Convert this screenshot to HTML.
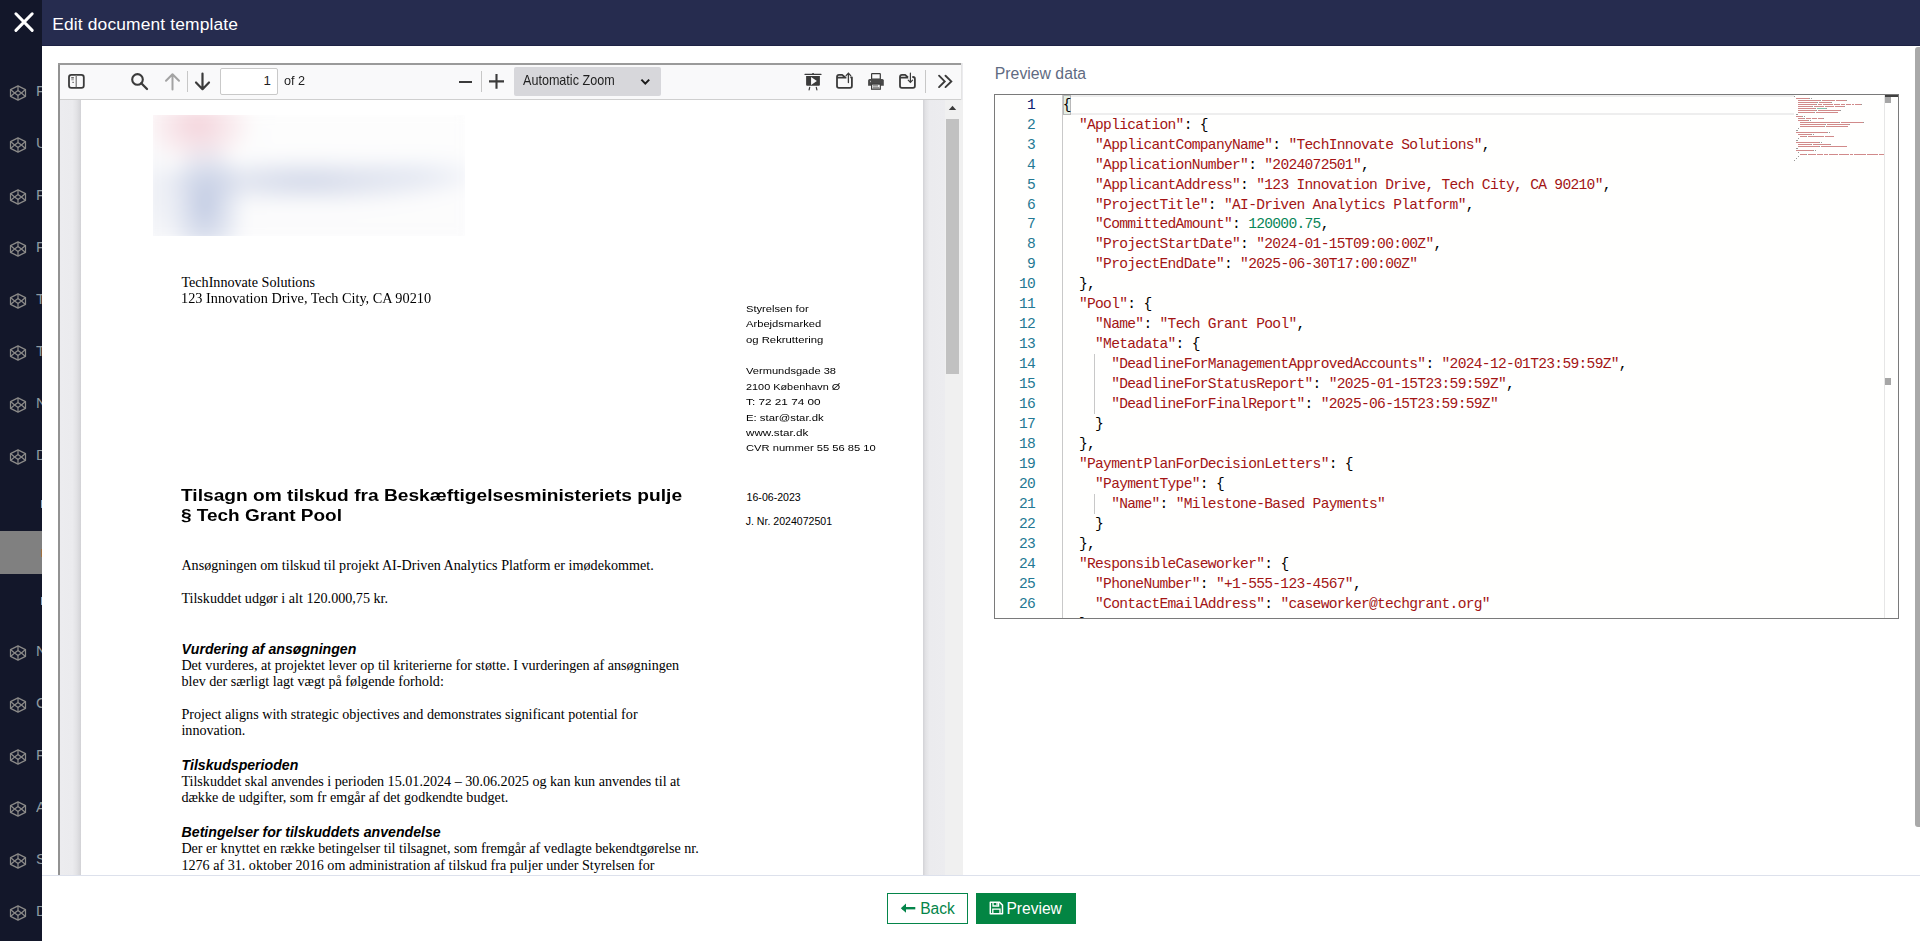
<!DOCTYPE html><html><head><meta charset="utf-8"><style>
html,body{margin:0;padding:0;width:1920px;height:941px;overflow:hidden;background:#fff;}
.t{position:absolute;white-space:pre;}
.r{position:absolute;}
svg{position:absolute;overflow:visible;}
</style></head><body><div class="r" style="left:0px;top:0px;width:42px;height:941px;background:#13172a;"></div><div class="r" style="left:42px;top:0px;width:1878px;height:46px;background:#262c4f;"></div><div class="r" style="left:42px;top:45px;width:1878px;height:1px;background:#1d2244;"></div><svg style="left:0;top:0" width="42" height="46"><path d="M15.9 13.8 L32.2 30.4 M32.2 13.8 L15.9 30.4" stroke="#fff" stroke-width="3" stroke-linecap="round"/></svg><div class="t" style="left:52.30px;top:14.75px;font-family:'Liberation Sans', sans-serif;font-size:17.4px;line-height:19.439px;color:#ffffff;font-weight:normal;font-style:normal;letter-spacing:0.14px;">Edit document template</div><div class="r" style="left:0px;top:531px;width:42px;height:43px;background:#808080;"></div><svg style="left:9px;top:83.5px" width="18" height="18" viewBox="-9 -9 18 18"><g fill="none" stroke="#8b8a88" stroke-width="1.25" stroke-linejoin="round">
<path d="M0 -7.1 L7.5 -3.4 L7.5 3.4 L0 7.1 L-7.5 3.4 L-7.5 -3.4 Z"/>
<path d="M0 -2.5 L3.4 0 L0 2.5 L-3.4 0 Z"/>
<path d="M0 -7.1 V-2.5 M0 2.5 V7.1 M-7.5 -3.4 L-3.4 0 L-7.5 3.4 M7.5 -3.4 L3.4 0 L7.5 3.4"/></g></svg><div class="t" style="left:36px;top:82.0px;width:6px;overflow:hidden;font-family:'Liberation Sans', sans-serif;font-size:15px;line-height:17px;color:#8f9aa0">F</div><svg style="left:9px;top:135.5px" width="18" height="18" viewBox="-9 -9 18 18"><g fill="none" stroke="#8b8a88" stroke-width="1.25" stroke-linejoin="round">
<path d="M0 -7.1 L7.5 -3.4 L7.5 3.4 L0 7.1 L-7.5 3.4 L-7.5 -3.4 Z"/>
<path d="M0 -2.5 L3.4 0 L0 2.5 L-3.4 0 Z"/>
<path d="M0 -7.1 V-2.5 M0 2.5 V7.1 M-7.5 -3.4 L-3.4 0 L-7.5 3.4 M7.5 -3.4 L3.4 0 L7.5 3.4"/></g></svg><div class="t" style="left:36px;top:134.0px;width:6px;overflow:hidden;font-family:'Liberation Sans', sans-serif;font-size:15px;line-height:17px;color:#8f9aa0">U</div><svg style="left:9px;top:187.5px" width="18" height="18" viewBox="-9 -9 18 18"><g fill="none" stroke="#8b8a88" stroke-width="1.25" stroke-linejoin="round">
<path d="M0 -7.1 L7.5 -3.4 L7.5 3.4 L0 7.1 L-7.5 3.4 L-7.5 -3.4 Z"/>
<path d="M0 -2.5 L3.4 0 L0 2.5 L-3.4 0 Z"/>
<path d="M0 -7.1 V-2.5 M0 2.5 V7.1 M-7.5 -3.4 L-3.4 0 L-7.5 3.4 M7.5 -3.4 L3.4 0 L7.5 3.4"/></g></svg><div class="t" style="left:36px;top:186.0px;width:6px;overflow:hidden;font-family:'Liberation Sans', sans-serif;font-size:15px;line-height:17px;color:#8f9aa0">F</div><svg style="left:9px;top:239.5px" width="18" height="18" viewBox="-9 -9 18 18"><g fill="none" stroke="#8b8a88" stroke-width="1.25" stroke-linejoin="round">
<path d="M0 -7.1 L7.5 -3.4 L7.5 3.4 L0 7.1 L-7.5 3.4 L-7.5 -3.4 Z"/>
<path d="M0 -2.5 L3.4 0 L0 2.5 L-3.4 0 Z"/>
<path d="M0 -7.1 V-2.5 M0 2.5 V7.1 M-7.5 -3.4 L-3.4 0 L-7.5 3.4 M7.5 -3.4 L3.4 0 L7.5 3.4"/></g></svg><div class="t" style="left:36px;top:238.0px;width:6px;overflow:hidden;font-family:'Liberation Sans', sans-serif;font-size:15px;line-height:17px;color:#8f9aa0">F</div><svg style="left:9px;top:291.5px" width="18" height="18" viewBox="-9 -9 18 18"><g fill="none" stroke="#8b8a88" stroke-width="1.25" stroke-linejoin="round">
<path d="M0 -7.1 L7.5 -3.4 L7.5 3.4 L0 7.1 L-7.5 3.4 L-7.5 -3.4 Z"/>
<path d="M0 -2.5 L3.4 0 L0 2.5 L-3.4 0 Z"/>
<path d="M0 -7.1 V-2.5 M0 2.5 V7.1 M-7.5 -3.4 L-3.4 0 L-7.5 3.4 M7.5 -3.4 L3.4 0 L7.5 3.4"/></g></svg><div class="t" style="left:36px;top:290.0px;width:6px;overflow:hidden;font-family:'Liberation Sans', sans-serif;font-size:15px;line-height:17px;color:#8f9aa0">T</div><svg style="left:9px;top:343.5px" width="18" height="18" viewBox="-9 -9 18 18"><g fill="none" stroke="#8b8a88" stroke-width="1.25" stroke-linejoin="round">
<path d="M0 -7.1 L7.5 -3.4 L7.5 3.4 L0 7.1 L-7.5 3.4 L-7.5 -3.4 Z"/>
<path d="M0 -2.5 L3.4 0 L0 2.5 L-3.4 0 Z"/>
<path d="M0 -7.1 V-2.5 M0 2.5 V7.1 M-7.5 -3.4 L-3.4 0 L-7.5 3.4 M7.5 -3.4 L3.4 0 L7.5 3.4"/></g></svg><div class="t" style="left:36px;top:342.0px;width:6px;overflow:hidden;font-family:'Liberation Sans', sans-serif;font-size:15px;line-height:17px;color:#8f9aa0">T</div><svg style="left:9px;top:395.5px" width="18" height="18" viewBox="-9 -9 18 18"><g fill="none" stroke="#8b8a88" stroke-width="1.25" stroke-linejoin="round">
<path d="M0 -7.1 L7.5 -3.4 L7.5 3.4 L0 7.1 L-7.5 3.4 L-7.5 -3.4 Z"/>
<path d="M0 -2.5 L3.4 0 L0 2.5 L-3.4 0 Z"/>
<path d="M0 -7.1 V-2.5 M0 2.5 V7.1 M-7.5 -3.4 L-3.4 0 L-7.5 3.4 M7.5 -3.4 L3.4 0 L7.5 3.4"/></g></svg><div class="t" style="left:36px;top:394.0px;width:6px;overflow:hidden;font-family:'Liberation Sans', sans-serif;font-size:15px;line-height:17px;color:#8f9aa0">N</div><svg style="left:9px;top:447.5px" width="18" height="18" viewBox="-9 -9 18 18"><g fill="none" stroke="#8b8a88" stroke-width="1.25" stroke-linejoin="round">
<path d="M0 -7.1 L7.5 -3.4 L7.5 3.4 L0 7.1 L-7.5 3.4 L-7.5 -3.4 Z"/>
<path d="M0 -2.5 L3.4 0 L0 2.5 L-3.4 0 Z"/>
<path d="M0 -7.1 V-2.5 M0 2.5 V7.1 M-7.5 -3.4 L-3.4 0 L-7.5 3.4 M7.5 -3.4 L3.4 0 L7.5 3.4"/></g></svg><div class="t" style="left:36px;top:446.0px;width:6px;overflow:hidden;font-family:'Liberation Sans', sans-serif;font-size:15px;line-height:17px;color:#8f9aa0">D</div><svg style="left:9px;top:643.5px" width="18" height="18" viewBox="-9 -9 18 18"><g fill="none" stroke="#8b8a88" stroke-width="1.25" stroke-linejoin="round">
<path d="M0 -7.1 L7.5 -3.4 L7.5 3.4 L0 7.1 L-7.5 3.4 L-7.5 -3.4 Z"/>
<path d="M0 -2.5 L3.4 0 L0 2.5 L-3.4 0 Z"/>
<path d="M0 -7.1 V-2.5 M0 2.5 V7.1 M-7.5 -3.4 L-3.4 0 L-7.5 3.4 M7.5 -3.4 L3.4 0 L7.5 3.4"/></g></svg><div class="t" style="left:36px;top:642.0px;width:6px;overflow:hidden;font-family:'Liberation Sans', sans-serif;font-size:15px;line-height:17px;color:#8f9aa0">N</div><svg style="left:9px;top:695.5px" width="18" height="18" viewBox="-9 -9 18 18"><g fill="none" stroke="#8b8a88" stroke-width="1.25" stroke-linejoin="round">
<path d="M0 -7.1 L7.5 -3.4 L7.5 3.4 L0 7.1 L-7.5 3.4 L-7.5 -3.4 Z"/>
<path d="M0 -2.5 L3.4 0 L0 2.5 L-3.4 0 Z"/>
<path d="M0 -7.1 V-2.5 M0 2.5 V7.1 M-7.5 -3.4 L-3.4 0 L-7.5 3.4 M7.5 -3.4 L3.4 0 L7.5 3.4"/></g></svg><div class="t" style="left:36px;top:694.0px;width:6px;overflow:hidden;font-family:'Liberation Sans', sans-serif;font-size:15px;line-height:17px;color:#8f9aa0">C</div><svg style="left:9px;top:747.5px" width="18" height="18" viewBox="-9 -9 18 18"><g fill="none" stroke="#8b8a88" stroke-width="1.25" stroke-linejoin="round">
<path d="M0 -7.1 L7.5 -3.4 L7.5 3.4 L0 7.1 L-7.5 3.4 L-7.5 -3.4 Z"/>
<path d="M0 -2.5 L3.4 0 L0 2.5 L-3.4 0 Z"/>
<path d="M0 -7.1 V-2.5 M0 2.5 V7.1 M-7.5 -3.4 L-3.4 0 L-7.5 3.4 M7.5 -3.4 L3.4 0 L7.5 3.4"/></g></svg><div class="t" style="left:36px;top:746.0px;width:6px;overflow:hidden;font-family:'Liberation Sans', sans-serif;font-size:15px;line-height:17px;color:#8f9aa0">F</div><svg style="left:9px;top:799.5px" width="18" height="18" viewBox="-9 -9 18 18"><g fill="none" stroke="#8b8a88" stroke-width="1.25" stroke-linejoin="round">
<path d="M0 -7.1 L7.5 -3.4 L7.5 3.4 L0 7.1 L-7.5 3.4 L-7.5 -3.4 Z"/>
<path d="M0 -2.5 L3.4 0 L0 2.5 L-3.4 0 Z"/>
<path d="M0 -7.1 V-2.5 M0 2.5 V7.1 M-7.5 -3.4 L-3.4 0 L-7.5 3.4 M7.5 -3.4 L3.4 0 L7.5 3.4"/></g></svg><div class="t" style="left:36px;top:798.0px;width:6px;overflow:hidden;font-family:'Liberation Sans', sans-serif;font-size:15px;line-height:17px;color:#8f9aa0">A</div><svg style="left:9px;top:851.5px" width="18" height="18" viewBox="-9 -9 18 18"><g fill="none" stroke="#8b8a88" stroke-width="1.25" stroke-linejoin="round">
<path d="M0 -7.1 L7.5 -3.4 L7.5 3.4 L0 7.1 L-7.5 3.4 L-7.5 -3.4 Z"/>
<path d="M0 -2.5 L3.4 0 L0 2.5 L-3.4 0 Z"/>
<path d="M0 -7.1 V-2.5 M0 2.5 V7.1 M-7.5 -3.4 L-3.4 0 L-7.5 3.4 M7.5 -3.4 L3.4 0 L7.5 3.4"/></g></svg><div class="t" style="left:36px;top:850.0px;width:6px;overflow:hidden;font-family:'Liberation Sans', sans-serif;font-size:15px;line-height:17px;color:#8f9aa0">S</div><svg style="left:9px;top:903.5px" width="18" height="18" viewBox="-9 -9 18 18"><g fill="none" stroke="#8b8a88" stroke-width="1.25" stroke-linejoin="round">
<path d="M0 -7.1 L7.5 -3.4 L7.5 3.4 L0 7.1 L-7.5 3.4 L-7.5 -3.4 Z"/>
<path d="M0 -2.5 L3.4 0 L0 2.5 L-3.4 0 Z"/>
<path d="M0 -7.1 V-2.5 M0 2.5 V7.1 M-7.5 -3.4 L-3.4 0 L-7.5 3.4 M7.5 -3.4 L3.4 0 L7.5 3.4"/></g></svg><div class="t" style="left:36px;top:902.0px;width:6px;overflow:hidden;font-family:'Liberation Sans', sans-serif;font-size:15px;line-height:17px;color:#8f9aa0">D</div><div class="r" style="left:41px;top:500px;width:1px;height:8px;background:#7fa6c8;"></div><div class="r" style="left:41px;top:548.5px;width:1px;height:8px;background:#a07040;"></div><div class="r" style="left:41px;top:596.5px;width:1px;height:8px;background:#7fa6c8;"></div><div class="r" style="left:58px;top:63px;width:905px;height:812px;background:#ebebee;"></div><div class="r" style="left:58px;top:63px;width:2px;height:812px;background:#929292;"></div><div class="r" style="left:58px;top:63px;width:904px;height:2px;background:#9a9a9a;"></div><div class="r" style="left:60px;top:65px;width:901px;height:34px;background:#f9f9fa;"></div><div class="r" style="left:961px;top:63px;width:1px;height:37px;background:#e4e4e4;"></div><div class="r" style="left:60px;top:99px;width:901px;height:1px;background:#cfcfcf;"></div><div class="r" style="left:60px;top:100px;width:21px;height:775px;background:linear-gradient(90deg,#ececef 0%,#ebebee 60%,#e2e2e5 80%,#d2d2d6 100%);"></div><div class="r" style="left:923px;top:100px;width:22px;height:775px;background:linear-gradient(90deg,#d2d2d6 0%,#e2e2e5 12%,#ebebee 30%,#ececef 100%);"></div><div class="r" style="left:945px;top:100px;width:18px;height:775px;background:#f0f0f0;"></div><svg style="left:945px;top:100px" width="18" height="20"><path d="M3.8 9.9 L7.5 5.8 L11.2 9.9 Z" fill="#3a3a3a"/></svg><div class="r" style="left:946px;top:119px;width:13px;height:255px;background:#c1c1c1;"></div><div class="r" style="left:81px;top:100px;width:842px;height:775px;background:#ffffff;"></div><svg style="left:66px;top:72px" width="22" height="20" viewBox="0 0 22 20"><rect x="3" y="2.8" width="14.8" height="13" rx="2.4" fill="none" stroke="#3b3b3b" stroke-width="1.8"/><rect x="9.5" y="3.5" width="1.5" height="11.6" fill="#8a8a8a"/><rect x="5.3" y="5.1" width="2.5" height="3.3" fill="#aaa"/><rect x="5.3" y="5.1" width="2.5" height="0.9" fill="#666"/><rect x="6.4" y="9.8" width="1.4" height="1.1" fill="#555"/></svg><svg style="left:128px;top:70px" width="24" height="24" viewBox="0 0 24 24"><circle cx="9.5" cy="9.4" r="5.3" fill="none" stroke="#3b3b3b" stroke-width="2.1"/><path d="M13.3 13.3 L19 19" stroke="#3b3b3b" stroke-width="2.3" stroke-linecap="round"/></svg><svg style="left:162px;top:70px" width="22" height="24" viewBox="0 0 22 24"><path d="M10.5 19.5 V4.5 M4 10.8 L10.5 4.2 L17 10.8" fill="none" stroke="#a3a3a3" stroke-width="2" stroke-linecap="round" stroke-linejoin="round"/></svg><div class="r" style="left:187px;top:71px;width:1px;height:21px;background:#c7c7c7;"></div><svg style="left:192px;top:70px" width="22" height="24" viewBox="0 0 22 24"><path d="M10.5 3.5 V19 M4 12.5 L10.5 19.2 L17 12.5" fill="none" stroke="#3b3b3b" stroke-width="2.2" stroke-linecap="round" stroke-linejoin="round"/></svg><div class="r" style="left:220px;top:68px;width:56px;height:25px;border:1px solid #c9c9c9;border-radius:2px;background:#fff;"></div><div class="t" style="left:263.50px;top:74.46px;font-family:'Liberation Sans', sans-serif;font-size:13.3px;line-height:14.859px;color:#1f1f1f;font-weight:normal;font-style:normal;">1</div><div class="t" style="left:283.70px;top:73.19px;font-family:'Liberation Sans', sans-serif;font-size:13.6px;line-height:15.194px;color:#1f1f1f;font-weight:normal;font-style:normal;transform:scaleX(0.9300);transform-origin:0 0;">of 2</div><div class="r" style="left:459px;top:80.5px;width:13.3px;height:2px;background:#3b3b3b;"></div><div class="r" style="left:481px;top:71px;width:1px;height:21px;background:#c7c7c7;"></div><svg style="left:487px;top:71px" width="20" height="20" viewBox="0 0 20 20"><path d="M9.5 3 V17.8 M2 10.4 H17" stroke="#3b3b3b" stroke-width="2.1"/></svg><div class="r" style="left:514px;top:67px;width:147px;height:29px;border-radius:2px;background:#d7d7db;"></div><div class="t" style="left:522.50px;top:72.65px;font-family:'Liberation Sans', sans-serif;font-size:14.2px;line-height:15.864px;color:#1f1f1f;font-weight:normal;font-style:normal;transform:scaleX(0.8870);transform-origin:0 0;">Automatic Zoom</div><svg style="left:638px;top:76px" width="14" height="12" viewBox="0 0 14 12"><path d="M3.4 3.6 L7.3 7.6 L11.2 3.6" fill="none" stroke="#1a1a1a" stroke-width="2"/></svg><svg style="left:803px;top:71px" width="22" height="22" viewBox="0 0 22 22"><path d="M2 3.4 H18" stroke="#3b3b3b" stroke-width="1.1" stroke-linecap="round"/><rect x="9.3" y="2" width="1.5" height="1.2" fill="#3b3b3b"/><path d="M3.1 5 H16.9 V13.7 Q16.9 14.7 15.9 14.7 H4.1 Q3.1 14.7 3.1 13.7 Z" fill="#3b3b3b"/><path d="M8.05 6.1 L13.9 10 L8.05 13.9 Z" fill="#f9f9fa"/><path d="M6.7 16.3 L6.1 18.8 M13.3 16.3 L13.9 18.8" stroke="#3b3b3b" stroke-width="1.2" stroke-linecap="round"/></svg><svg style="left:834px;top:70px" width="22" height="22" viewBox="0 0 22 22"><path d="M12.4 7.7 H3 M3 7.7 V16 Q3 17.9 4.9 17.9 H16 Q17.9 17.9 17.9 16 V7.3 H16.3 M3 7.7 V6.9 Q3 4.9 5 4.9 H8.2 L11.6 7.7" fill="none" stroke="#3b3b3b" stroke-width="1.8" stroke-linejoin="round"/><path d="M14.4 12.6 V3.3 M12.1 5.6 L14.4 3.1 L16.7 5.6" fill="none" stroke="#3b3b3b" stroke-width="1.3" stroke-linecap="round"/></svg><svg style="left:866px;top:71px" width="22" height="22" viewBox="0 0 22 22"><rect x="5.6" y="2.6" width="8.7" height="5.6" rx="0.5" fill="none" stroke="#3b3b3b" stroke-width="1.2"/><path d="M2.1 9.4 Q2.1 7.9 3.6 7.9 H16.3 Q17.8 7.9 17.8 9.4 V14.7 H2.1 Z" fill="#484848"/><rect x="5.6" y="13.1" width="8.7" height="5.1" fill="#fbfbfb" stroke="#3b3b3b" stroke-width="1.2"/><path d="M7.3 14.9 H11.8 M7.3 16.9 H12.9" stroke="#3b3b3b" stroke-width="0.9" stroke-linecap="round"/><rect x="4" y="9.8" width="0.9" height="1.4" fill="#bbb"/></svg><svg style="left:897px;top:70px" width="22" height="22" viewBox="0 0 22 22"><path d="M11.3 7.7 H3 M3 7.7 V16 Q3 17.9 4.9 17.9 H16 Q17.9 17.9 17.9 16 V8.9 Q17.9 7 16 7 H15.3 M3 7.7 V6.9 Q3 4.9 5 4.9 H8.2 L11 7.4" fill="none" stroke="#3b3b3b" stroke-width="1.8" stroke-linejoin="round"/><path d="M13.4 3 V12.2 M11.2 10.1 L13.4 12.4 L15.6 10.1" fill="none" stroke="#3b3b3b" stroke-width="1.2" stroke-linecap="round"/></svg><div class="r" style="left:925px;top:70px;width:1px;height:23px;background:#c7c7c7;"></div><svg style="left:936px;top:72px" width="20" height="18" viewBox="0 0 20 18"><path d="M3.05 3.7 L8.7 9.4 L3.05 15.1 M9.5 3.7 L15.3 9.4 L9.5 15.1" fill="none" stroke="#3b3b3b" stroke-width="1.9" stroke-linecap="round" stroke-linejoin="miter"/></svg><div class="r" style="left:153px;top:115px;width:312px;height:121px;overflow:hidden;background:#fcfcfd;">
<div class="r" style="left:-10px;top:-10px;width:332px;height:141px;filter:blur(8px);background:
radial-gradient(ellipse 58px 42px at 55px 20px, rgba(236,176,190,0.55), rgba(236,176,190,0) 100%),
radial-gradient(ellipse 42px 70px at 62px 100px, rgba(178,190,220,0.8), rgba(178,190,220,0) 100%),
radial-gradient(ellipse 170px 26px at 165px 76px, rgba(196,204,226,0.75), rgba(196,204,226,0) 100%),
radial-gradient(ellipse 80px 20px at 280px 68px, rgba(222,228,242,0.45), rgba(222,228,242,0) 100%),
radial-gradient(ellipse 30px 60px at 12px 95px, rgba(226,230,240,0.6), rgba(226,230,240,0) 100%),
linear-gradient(180deg,#fdfdfd,#fbfbfc);"></div></div><div class="t" style="left:181.40px;top:274.91px;font-family:'Liberation Serif', serif;font-size:14.13px;line-height:15.648px;color:#000;font-weight:normal;font-style:normal;">TechInnovate Solutions</div><div class="t" style="left:181.40px;top:290.91px;font-family:'Liberation Serif', serif;font-size:14.13px;line-height:15.648px;color:#000;font-weight:normal;font-style:normal;transform:scaleX(1.0110);transform-origin:0 0;">123 Innovation Drive, Tech City, CA 90210</div><div class="t" style="left:746.20px;top:302.54px;font-family:'Liberation Sans', sans-serif;font-size:9.9px;line-height:11.060px;color:#000;font-weight:normal;font-style:normal;transform:scaleX(1.1301);transform-origin:0 0;">Styrelsen for</div><div class="t" style="left:746.20px;top:317.54px;font-family:'Liberation Sans', sans-serif;font-size:9.9px;line-height:11.060px;color:#000;font-weight:normal;font-style:normal;transform:scaleX(1.1316);transform-origin:0 0;">Arbejdsmarked</div><div class="t" style="left:746.20px;top:333.54px;font-family:'Liberation Sans', sans-serif;font-size:9.9px;line-height:11.060px;color:#000;font-weight:normal;font-style:normal;transform:scaleX(1.1442);transform-origin:0 0;">og Rekruttering</div><div class="t" style="left:746.20px;top:364.54px;font-family:'Liberation Sans', sans-serif;font-size:9.9px;line-height:11.060px;color:#000;font-weight:normal;font-style:normal;transform:scaleX(1.1230);transform-origin:0 0;">Vermundsgade 38</div><div class="t" style="left:746.20px;top:380.54px;font-family:'Liberation Sans', sans-serif;font-size:9.9px;line-height:11.060px;color:#000;font-weight:normal;font-style:normal;transform:scaleX(1.1012);transform-origin:0 0;">2100 København Ø</div><div class="t" style="left:746.20px;top:395.54px;font-family:'Liberation Sans', sans-serif;font-size:9.9px;line-height:11.060px;color:#000;font-weight:normal;font-style:normal;transform:scaleX(1.1930);transform-origin:0 0;">T: 72 21 74 00</div><div class="t" style="left:746.20px;top:411.54px;font-family:'Liberation Sans', sans-serif;font-size:9.9px;line-height:11.060px;color:#000;font-weight:normal;font-style:normal;transform:scaleX(1.1488);transform-origin:0 0;">E: star@star.dk</div><div class="t" style="left:746.20px;top:426.54px;font-family:'Liberation Sans', sans-serif;font-size:9.9px;line-height:11.060px;color:#000;font-weight:normal;font-style:normal;transform:scaleX(1.1813);transform-origin:0 0;">www.star.dk</div><div class="t" style="left:746.20px;top:441.54px;font-family:'Liberation Sans', sans-serif;font-size:9.9px;line-height:11.060px;color:#000;font-weight:normal;font-style:normal;transform:scaleX(1.1310);transform-origin:0 0;">CVR nummer 55 56 85 10</div><div class="t" style="left:746.60px;top:491.92px;font-family:'Liberation Sans', sans-serif;font-size:10.58px;line-height:11.820px;color:#000;font-weight:normal;font-style:normal;">16-06-2023</div><div class="t" style="left:745.70px;top:515.92px;font-family:'Liberation Sans', sans-serif;font-size:10.58px;line-height:11.820px;color:#000;font-weight:normal;font-style:normal;">J. Nr. 2024072501</div><div class="t" style="left:181.40px;top:485.93px;font-family:'Liberation Sans', sans-serif;font-size:17.2px;line-height:19.216px;color:#000;font-weight:bold;font-style:normal;transform:scaleX(1.1145);transform-origin:0 0;">Tilsagn om tilskud fra Beskæftigelsesministeriets pulje</div><div class="t" style="left:181.40px;top:505.93px;font-family:'Liberation Sans', sans-serif;font-size:17.2px;line-height:19.216px;color:#000;font-weight:bold;font-style:normal;transform:scaleX(1.1039);transform-origin:0 0;">§ Tech Grant Pool</div><div class="t" style="left:181.40px;top:557.91px;font-family:'Liberation Serif', serif;font-size:14.13px;line-height:15.648px;color:#000;font-weight:normal;font-style:normal;">Ansøgningen om tilskud til projekt AI-Driven Analytics Platform er imødekommet.</div><div class="t" style="left:181.40px;top:590.91px;font-family:'Liberation Serif', serif;font-size:14.13px;line-height:15.648px;color:#000;font-weight:normal;font-style:normal;">Tilskuddet udgør i alt 120.000,75 kr.</div><div class="t" style="left:181.60px;top:641.71px;font-family:'Liberation Sans', sans-serif;font-size:14.13px;line-height:15.786px;color:#000;font-weight:bold;font-style:italic;">Vurdering af ansøgningen</div><div class="t" style="left:181.40px;top:657.91px;font-family:'Liberation Serif', serif;font-size:14.13px;line-height:15.648px;color:#000;font-weight:normal;font-style:normal;">Det vurderes, at projektet lever op til kriterierne for støtte. I vurderingen af ansøgningen</div><div class="t" style="left:181.40px;top:673.91px;font-family:'Liberation Serif', serif;font-size:14.13px;line-height:15.648px;color:#000;font-weight:normal;font-style:normal;">blev der særligt lagt vægt på følgende forhold:</div><div class="t" style="left:181.40px;top:706.91px;font-family:'Liberation Serif', serif;font-size:14.13px;line-height:15.648px;color:#000;font-weight:normal;font-style:normal;">Project aligns with strategic objectives and demonstrates significant potential for</div><div class="t" style="left:181.40px;top:722.91px;font-family:'Liberation Serif', serif;font-size:14.13px;line-height:15.648px;color:#000;font-weight:normal;font-style:normal;">innovation.</div><div class="t" style="left:181.60px;top:757.71px;font-family:'Liberation Sans', sans-serif;font-size:14.13px;line-height:15.786px;color:#000;font-weight:bold;font-style:italic;">Tilskudsperioden</div><div class="t" style="left:181.40px;top:773.91px;font-family:'Liberation Serif', serif;font-size:14.13px;line-height:15.648px;color:#000;font-weight:normal;font-style:normal;">Tilskuddet skal anvendes i perioden 15.01.2024 – 30.06.2025 og kan kun anvendes til at</div><div class="t" style="left:181.40px;top:789.91px;font-family:'Liberation Serif', serif;font-size:14.13px;line-height:15.648px;color:#000;font-weight:normal;font-style:normal;">dække de udgifter, som fr emgår af det godkendte budget.</div><div class="t" style="left:181.60px;top:824.71px;font-family:'Liberation Sans', sans-serif;font-size:14.13px;line-height:15.786px;color:#000;font-weight:bold;font-style:italic;">Betingelser for tilskuddets anvendelse</div><div class="t" style="left:181.40px;top:840.91px;font-family:'Liberation Serif', serif;font-size:14.13px;line-height:15.648px;color:#000;font-weight:normal;font-style:normal;">Der er knyttet en række betingelser til tilsagnet, som fremgår af vedlagte bekendtgørelse nr.</div><div class="t" style="left:181.40px;top:857.91px;font-family:'Liberation Serif', serif;font-size:14.13px;line-height:15.648px;color:#000;font-weight:normal;font-style:normal;">1276 af 31. oktober 2016 om administration af tilskud fra puljer under Styrelsen for</div><div class="t" style="left:994.80px;top:65.20px;font-family:'Liberation Sans', sans-serif;font-size:15.8px;line-height:17.652px;color:#5f6b82;font-weight:normal;font-style:normal;">Preview data</div><div class="r" style="left:994px;top:94px;width:905px;height:525px;box-sizing:border-box;border:1px solid #7a7a7a;background:#fffffe;overflow:hidden;"><div class="r" style="left:68px;top:0px;width:731px;height:2px;background:#eeeeee;"></div><div class="r" style="left:68px;top:18px;width:731px;height:2px;background:#eeeeee;"></div><div class="r" style="left:67px;top:0px;width:1px;height:523px;background:#c9c9c9;"></div><div class="r" style="left:68px;top:0px;width:8px;height:20px;background:#e4eee4;box-sizing:border-box;border:1px solid #b9b9b9;"></div><div class="r" style="left:99px;top:259px;width:1px;height:60px;background:#c8c8c8;"></div><div class="r" style="left:99px;top:399px;width:1px;height:20px;background:#c8c8c8;"></div><div class="t" style="left:31.94px;top:2.35px;font-family:'Liberation Mono', monospace;font-size:14.6px;line-height:16.539px;letter-spacing:-0.700px;color:#0b216f">1</div><div class="t" style="left:67.80px;top:2.35px;font-family:'Liberation Mono', monospace;font-size:14.6px;line-height:16.539px;letter-spacing:-0.700px;"><span style="color:#000000">{</span></div><div class="t" style="left:31.94px;top:22.35px;font-family:'Liberation Mono', monospace;font-size:14.6px;line-height:16.539px;letter-spacing:-0.700px;color:#237893">2</div><div class="t" style="left:67.80px;top:22.35px;font-family:'Liberation Mono', monospace;font-size:14.6px;line-height:16.539px;letter-spacing:-0.700px;">  <span style="color:#a31515">&quot;Application&quot;</span><span style="color:#000000">:</span> <span style="color:#000000">{</span></div><div class="t" style="left:31.94px;top:42.35px;font-family:'Liberation Mono', monospace;font-size:14.6px;line-height:16.539px;letter-spacing:-0.700px;color:#237893">3</div><div class="t" style="left:67.80px;top:42.35px;font-family:'Liberation Mono', monospace;font-size:14.6px;line-height:16.539px;letter-spacing:-0.700px;">    <span style="color:#a31515">&quot;ApplicantCompanyName&quot;</span><span style="color:#000000">:</span> <span style="color:#a31515">&quot;TechInnovate Solutions&quot;</span><span style="color:#000000">,</span></div><div class="t" style="left:31.94px;top:62.35px;font-family:'Liberation Mono', monospace;font-size:14.6px;line-height:16.539px;letter-spacing:-0.700px;color:#237893">4</div><div class="t" style="left:67.80px;top:62.35px;font-family:'Liberation Mono', monospace;font-size:14.6px;line-height:16.539px;letter-spacing:-0.700px;">    <span style="color:#a31515">&quot;ApplicationNumber&quot;</span><span style="color:#000000">:</span> <span style="color:#a31515">&quot;2024072501&quot;</span><span style="color:#000000">,</span></div><div class="t" style="left:31.94px;top:82.35px;font-family:'Liberation Mono', monospace;font-size:14.6px;line-height:16.539px;letter-spacing:-0.700px;color:#237893">5</div><div class="t" style="left:67.80px;top:82.35px;font-family:'Liberation Mono', monospace;font-size:14.6px;line-height:16.539px;letter-spacing:-0.700px;">    <span style="color:#a31515">&quot;ApplicantAddress&quot;</span><span style="color:#000000">:</span> <span style="color:#a31515">&quot;123 Innovation Drive, Tech City, CA 90210&quot;</span><span style="color:#000000">,</span></div><div class="t" style="left:31.94px;top:102.35px;font-family:'Liberation Mono', monospace;font-size:14.6px;line-height:16.539px;letter-spacing:-0.700px;color:#237893">6</div><div class="t" style="left:67.80px;top:102.35px;font-family:'Liberation Mono', monospace;font-size:14.6px;line-height:16.539px;letter-spacing:-0.700px;">    <span style="color:#a31515">&quot;ProjectTitle&quot;</span><span style="color:#000000">:</span> <span style="color:#a31515">&quot;AI-Driven Analytics Platform&quot;</span><span style="color:#000000">,</span></div><div class="t" style="left:31.94px;top:121.35px;font-family:'Liberation Mono', monospace;font-size:14.6px;line-height:16.539px;letter-spacing:-0.700px;color:#237893">7</div><div class="t" style="left:67.80px;top:121.35px;font-family:'Liberation Mono', monospace;font-size:14.6px;line-height:16.539px;letter-spacing:-0.700px;">    <span style="color:#a31515">&quot;CommittedAmount&quot;</span><span style="color:#000000">:</span> <span style="color:#098658">120000.75</span><span style="color:#000000">,</span></div><div class="t" style="left:31.94px;top:141.35px;font-family:'Liberation Mono', monospace;font-size:14.6px;line-height:16.539px;letter-spacing:-0.700px;color:#237893">8</div><div class="t" style="left:67.80px;top:141.35px;font-family:'Liberation Mono', monospace;font-size:14.6px;line-height:16.539px;letter-spacing:-0.700px;">    <span style="color:#a31515">&quot;ProjectStartDate&quot;</span><span style="color:#000000">:</span> <span style="color:#a31515">&quot;2024-01-15T09:00:00Z&quot;</span><span style="color:#000000">,</span></div><div class="t" style="left:31.94px;top:161.35px;font-family:'Liberation Mono', monospace;font-size:14.6px;line-height:16.539px;letter-spacing:-0.700px;color:#237893">9</div><div class="t" style="left:67.80px;top:161.35px;font-family:'Liberation Mono', monospace;font-size:14.6px;line-height:16.539px;letter-spacing:-0.700px;">    <span style="color:#a31515">&quot;ProjectEndDate&quot;</span><span style="color:#000000">:</span> <span style="color:#a31515">&quot;2025-06-30T17:00:00Z&quot;</span></div><div class="t" style="left:23.88px;top:181.35px;font-family:'Liberation Mono', monospace;font-size:14.6px;line-height:16.539px;letter-spacing:-0.700px;color:#237893">10</div><div class="t" style="left:67.80px;top:181.35px;font-family:'Liberation Mono', monospace;font-size:14.6px;line-height:16.539px;letter-spacing:-0.700px;">  <span style="color:#000000">}</span><span style="color:#000000">,</span></div><div class="t" style="left:23.88px;top:201.35px;font-family:'Liberation Mono', monospace;font-size:14.6px;line-height:16.539px;letter-spacing:-0.700px;color:#237893">11</div><div class="t" style="left:67.80px;top:201.35px;font-family:'Liberation Mono', monospace;font-size:14.6px;line-height:16.539px;letter-spacing:-0.700px;">  <span style="color:#a31515">&quot;Pool&quot;</span><span style="color:#000000">:</span> <span style="color:#000000">{</span></div><div class="t" style="left:23.88px;top:221.35px;font-family:'Liberation Mono', monospace;font-size:14.6px;line-height:16.539px;letter-spacing:-0.700px;color:#237893">12</div><div class="t" style="left:67.80px;top:221.35px;font-family:'Liberation Mono', monospace;font-size:14.6px;line-height:16.539px;letter-spacing:-0.700px;">    <span style="color:#a31515">&quot;Name&quot;</span><span style="color:#000000">:</span> <span style="color:#a31515">&quot;Tech Grant Pool&quot;</span><span style="color:#000000">,</span></div><div class="t" style="left:23.88px;top:241.35px;font-family:'Liberation Mono', monospace;font-size:14.6px;line-height:16.539px;letter-spacing:-0.700px;color:#237893">13</div><div class="t" style="left:67.80px;top:241.35px;font-family:'Liberation Mono', monospace;font-size:14.6px;line-height:16.539px;letter-spacing:-0.700px;">    <span style="color:#a31515">&quot;Metadata&quot;</span><span style="color:#000000">:</span> <span style="color:#000000">{</span></div><div class="t" style="left:23.88px;top:261.35px;font-family:'Liberation Mono', monospace;font-size:14.6px;line-height:16.539px;letter-spacing:-0.700px;color:#237893">14</div><div class="t" style="left:67.80px;top:261.35px;font-family:'Liberation Mono', monospace;font-size:14.6px;line-height:16.539px;letter-spacing:-0.700px;">      <span style="color:#a31515">&quot;DeadlineForManagementApprovedAccounts&quot;</span><span style="color:#000000">:</span> <span style="color:#a31515">&quot;2024-12-01T23:59:59Z&quot;</span><span style="color:#000000">,</span></div><div class="t" style="left:23.88px;top:281.35px;font-family:'Liberation Mono', monospace;font-size:14.6px;line-height:16.539px;letter-spacing:-0.700px;color:#237893">15</div><div class="t" style="left:67.80px;top:281.35px;font-family:'Liberation Mono', monospace;font-size:14.6px;line-height:16.539px;letter-spacing:-0.700px;">      <span style="color:#a31515">&quot;DeadlineForStatusReport&quot;</span><span style="color:#000000">:</span> <span style="color:#a31515">&quot;2025-01-15T23:59:59Z&quot;</span><span style="color:#000000">,</span></div><div class="t" style="left:23.88px;top:301.35px;font-family:'Liberation Mono', monospace;font-size:14.6px;line-height:16.539px;letter-spacing:-0.700px;color:#237893">16</div><div class="t" style="left:67.80px;top:301.35px;font-family:'Liberation Mono', monospace;font-size:14.6px;line-height:16.539px;letter-spacing:-0.700px;">      <span style="color:#a31515">&quot;DeadlineForFinalReport&quot;</span><span style="color:#000000">:</span> <span style="color:#a31515">&quot;2025-06-15T23:59:59Z&quot;</span></div><div class="t" style="left:23.88px;top:321.35px;font-family:'Liberation Mono', monospace;font-size:14.6px;line-height:16.539px;letter-spacing:-0.700px;color:#237893">17</div><div class="t" style="left:67.80px;top:321.35px;font-family:'Liberation Mono', monospace;font-size:14.6px;line-height:16.539px;letter-spacing:-0.700px;">    <span style="color:#000000">}</span></div><div class="t" style="left:23.88px;top:341.35px;font-family:'Liberation Mono', monospace;font-size:14.6px;line-height:16.539px;letter-spacing:-0.700px;color:#237893">18</div><div class="t" style="left:67.80px;top:341.35px;font-family:'Liberation Mono', monospace;font-size:14.6px;line-height:16.539px;letter-spacing:-0.700px;">  <span style="color:#000000">}</span><span style="color:#000000">,</span></div><div class="t" style="left:23.88px;top:361.35px;font-family:'Liberation Mono', monospace;font-size:14.6px;line-height:16.539px;letter-spacing:-0.700px;color:#237893">19</div><div class="t" style="left:67.80px;top:361.35px;font-family:'Liberation Mono', monospace;font-size:14.6px;line-height:16.539px;letter-spacing:-0.700px;">  <span style="color:#a31515">&quot;PaymentPlanForDecisionLetters&quot;</span><span style="color:#000000">:</span> <span style="color:#000000">{</span></div><div class="t" style="left:23.88px;top:381.35px;font-family:'Liberation Mono', monospace;font-size:14.6px;line-height:16.539px;letter-spacing:-0.700px;color:#237893">20</div><div class="t" style="left:67.80px;top:381.35px;font-family:'Liberation Mono', monospace;font-size:14.6px;line-height:16.539px;letter-spacing:-0.700px;">    <span style="color:#a31515">&quot;PaymentType&quot;</span><span style="color:#000000">:</span> <span style="color:#000000">{</span></div><div class="t" style="left:23.88px;top:401.35px;font-family:'Liberation Mono', monospace;font-size:14.6px;line-height:16.539px;letter-spacing:-0.700px;color:#237893">21</div><div class="t" style="left:67.80px;top:401.35px;font-family:'Liberation Mono', monospace;font-size:14.6px;line-height:16.539px;letter-spacing:-0.700px;">      <span style="color:#a31515">&quot;Name&quot;</span><span style="color:#000000">:</span> <span style="color:#a31515">&quot;Milestone-Based Payments&quot;</span></div><div class="t" style="left:23.88px;top:421.35px;font-family:'Liberation Mono', monospace;font-size:14.6px;line-height:16.539px;letter-spacing:-0.700px;color:#237893">22</div><div class="t" style="left:67.80px;top:421.35px;font-family:'Liberation Mono', monospace;font-size:14.6px;line-height:16.539px;letter-spacing:-0.700px;">    <span style="color:#000000">}</span></div><div class="t" style="left:23.88px;top:441.35px;font-family:'Liberation Mono', monospace;font-size:14.6px;line-height:16.539px;letter-spacing:-0.700px;color:#237893">23</div><div class="t" style="left:67.80px;top:441.35px;font-family:'Liberation Mono', monospace;font-size:14.6px;line-height:16.539px;letter-spacing:-0.700px;">  <span style="color:#000000">}</span><span style="color:#000000">,</span></div><div class="t" style="left:23.88px;top:461.35px;font-family:'Liberation Mono', monospace;font-size:14.6px;line-height:16.539px;letter-spacing:-0.700px;color:#237893">24</div><div class="t" style="left:67.80px;top:461.35px;font-family:'Liberation Mono', monospace;font-size:14.6px;line-height:16.539px;letter-spacing:-0.700px;">  <span style="color:#a31515">&quot;ResponsibleCaseworker&quot;</span><span style="color:#000000">:</span> <span style="color:#000000">{</span></div><div class="t" style="left:23.88px;top:481.35px;font-family:'Liberation Mono', monospace;font-size:14.6px;line-height:16.539px;letter-spacing:-0.700px;color:#237893">25</div><div class="t" style="left:67.80px;top:481.35px;font-family:'Liberation Mono', monospace;font-size:14.6px;line-height:16.539px;letter-spacing:-0.700px;">    <span style="color:#a31515">&quot;PhoneNumber&quot;</span><span style="color:#000000">:</span> <span style="color:#a31515">&quot;+1-555-123-4567&quot;</span><span style="color:#000000">,</span></div><div class="t" style="left:23.88px;top:501.35px;font-family:'Liberation Mono', monospace;font-size:14.6px;line-height:16.539px;letter-spacing:-0.700px;color:#237893">26</div><div class="t" style="left:67.80px;top:501.35px;font-family:'Liberation Mono', monospace;font-size:14.6px;line-height:16.539px;letter-spacing:-0.700px;">    <span style="color:#a31515">&quot;ContactEmailAddress&quot;</span><span style="color:#000000">:</span> <span style="color:#a31515">&quot;caseworker@techgrant.org&quot;</span></div><div class="t" style="left:23.88px;top:521.35px;font-family:'Liberation Mono', monospace;font-size:14.6px;line-height:16.539px;letter-spacing:-0.700px;color:#237893">27</div><div class="t" style="left:67.80px;top:521.35px;font-family:'Liberation Mono', monospace;font-size:14.6px;line-height:16.539px;letter-spacing:-0.700px;">  <span style="color:#000000">}</span><span style="color:#000000">,</span></div><div class="r" style="left:799px;top:0.5px;width:1px;height:1px;background:#000000;opacity:0.4"></div><div class="r" style="left:801px;top:2.5px;width:13px;height:1px;background:#a31515;opacity:0.5"></div><div class="r" style="left:814px;top:2.5px;width:1px;height:1px;background:#000000;opacity:0.4"></div><div class="r" style="left:816px;top:2.5px;width:1px;height:1px;background:#000000;opacity:0.4"></div><div class="r" style="left:803px;top:4.5px;width:22px;height:1px;background:#a31515;opacity:0.5"></div><div class="r" style="left:825px;top:4.5px;width:1px;height:1px;background:#000000;opacity:0.4"></div><div class="r" style="left:827px;top:4.5px;width:13px;height:1px;background:#a31515;opacity:0.5"></div><div class="r" style="left:841px;top:4.5px;width:10px;height:1px;background:#a31515;opacity:0.5"></div><div class="r" style="left:851px;top:4.5px;width:1px;height:1px;background:#000000;opacity:0.4"></div><div class="r" style="left:803px;top:6.5px;width:19px;height:1px;background:#a31515;opacity:0.5"></div><div class="r" style="left:822px;top:6.5px;width:1px;height:1px;background:#000000;opacity:0.4"></div><div class="r" style="left:824px;top:6.5px;width:12px;height:1px;background:#a31515;opacity:0.5"></div><div class="r" style="left:836px;top:6.5px;width:1px;height:1px;background:#000000;opacity:0.4"></div><div class="r" style="left:803px;top:8.5px;width:18px;height:1px;background:#a31515;opacity:0.5"></div><div class="r" style="left:821px;top:8.5px;width:1px;height:1px;background:#000000;opacity:0.4"></div><div class="r" style="left:823px;top:8.5px;width:4px;height:1px;background:#a31515;opacity:0.5"></div><div class="r" style="left:828px;top:8.5px;width:10px;height:1px;background:#a31515;opacity:0.5"></div><div class="r" style="left:839px;top:8.5px;width:6px;height:1px;background:#a31515;opacity:0.5"></div><div class="r" style="left:846px;top:8.5px;width:4px;height:1px;background:#a31515;opacity:0.5"></div><div class="r" style="left:851px;top:8.5px;width:5px;height:1px;background:#a31515;opacity:0.5"></div><div class="r" style="left:857px;top:8.5px;width:2px;height:1px;background:#a31515;opacity:0.5"></div><div class="r" style="left:860px;top:8.5px;width:6px;height:1px;background:#a31515;opacity:0.5"></div><div class="r" style="left:866px;top:8.5px;width:1px;height:1px;background:#000000;opacity:0.4"></div><div class="r" style="left:803px;top:10.5px;width:14px;height:1px;background:#a31515;opacity:0.5"></div><div class="r" style="left:817px;top:10.5px;width:1px;height:1px;background:#000000;opacity:0.4"></div><div class="r" style="left:819px;top:10.5px;width:10px;height:1px;background:#a31515;opacity:0.5"></div><div class="r" style="left:830px;top:10.5px;width:9px;height:1px;background:#a31515;opacity:0.5"></div><div class="r" style="left:840px;top:10.5px;width:9px;height:1px;background:#a31515;opacity:0.5"></div><div class="r" style="left:849px;top:10.5px;width:1px;height:1px;background:#000000;opacity:0.4"></div><div class="r" style="left:803px;top:12.5px;width:17px;height:1px;background:#a31515;opacity:0.5"></div><div class="r" style="left:820px;top:12.5px;width:1px;height:1px;background:#000000;opacity:0.4"></div><div class="r" style="left:822px;top:12.5px;width:9px;height:1px;background:#098658;opacity:0.5"></div><div class="r" style="left:831px;top:12.5px;width:1px;height:1px;background:#000000;opacity:0.4"></div><div class="r" style="left:803px;top:14.5px;width:18px;height:1px;background:#a31515;opacity:0.5"></div><div class="r" style="left:821px;top:14.5px;width:1px;height:1px;background:#000000;opacity:0.4"></div><div class="r" style="left:823px;top:14.5px;width:22px;height:1px;background:#a31515;opacity:0.5"></div><div class="r" style="left:845px;top:14.5px;width:1px;height:1px;background:#000000;opacity:0.4"></div><div class="r" style="left:803px;top:16.5px;width:16px;height:1px;background:#a31515;opacity:0.5"></div><div class="r" style="left:819px;top:16.5px;width:1px;height:1px;background:#000000;opacity:0.4"></div><div class="r" style="left:821px;top:16.5px;width:22px;height:1px;background:#a31515;opacity:0.5"></div><div class="r" style="left:801px;top:18.5px;width:1px;height:1px;background:#000000;opacity:0.4"></div><div class="r" style="left:802px;top:18.5px;width:1px;height:1px;background:#000000;opacity:0.4"></div><div class="r" style="left:801px;top:20.5px;width:6px;height:1px;background:#a31515;opacity:0.5"></div><div class="r" style="left:807px;top:20.5px;width:1px;height:1px;background:#000000;opacity:0.4"></div><div class="r" style="left:809px;top:20.5px;width:1px;height:1px;background:#000000;opacity:0.4"></div><div class="r" style="left:803px;top:22.5px;width:6px;height:1px;background:#a31515;opacity:0.5"></div><div class="r" style="left:809px;top:22.5px;width:1px;height:1px;background:#000000;opacity:0.4"></div><div class="r" style="left:811px;top:22.5px;width:5px;height:1px;background:#a31515;opacity:0.5"></div><div class="r" style="left:817px;top:22.5px;width:5px;height:1px;background:#a31515;opacity:0.5"></div><div class="r" style="left:823px;top:22.5px;width:5px;height:1px;background:#a31515;opacity:0.5"></div><div class="r" style="left:828px;top:22.5px;width:1px;height:1px;background:#000000;opacity:0.4"></div><div class="r" style="left:803px;top:24.5px;width:10px;height:1px;background:#a31515;opacity:0.5"></div><div class="r" style="left:813px;top:24.5px;width:1px;height:1px;background:#000000;opacity:0.4"></div><div class="r" style="left:815px;top:24.5px;width:1px;height:1px;background:#000000;opacity:0.4"></div><div class="r" style="left:805px;top:26.5px;width:39px;height:1px;background:#a31515;opacity:0.5"></div><div class="r" style="left:844px;top:26.5px;width:1px;height:1px;background:#000000;opacity:0.4"></div><div class="r" style="left:846px;top:26.5px;width:22px;height:1px;background:#a31515;opacity:0.5"></div><div class="r" style="left:868px;top:26.5px;width:1px;height:1px;background:#000000;opacity:0.4"></div><div class="r" style="left:805px;top:28.5px;width:25px;height:1px;background:#a31515;opacity:0.5"></div><div class="r" style="left:830px;top:28.5px;width:1px;height:1px;background:#000000;opacity:0.4"></div><div class="r" style="left:832px;top:28.5px;width:22px;height:1px;background:#a31515;opacity:0.5"></div><div class="r" style="left:854px;top:28.5px;width:1px;height:1px;background:#000000;opacity:0.4"></div><div class="r" style="left:805px;top:30.5px;width:24px;height:1px;background:#a31515;opacity:0.5"></div><div class="r" style="left:829px;top:30.5px;width:1px;height:1px;background:#000000;opacity:0.4"></div><div class="r" style="left:831px;top:30.5px;width:22px;height:1px;background:#a31515;opacity:0.5"></div><div class="r" style="left:803px;top:32.5px;width:1px;height:1px;background:#000000;opacity:0.4"></div><div class="r" style="left:801px;top:34.5px;width:1px;height:1px;background:#000000;opacity:0.4"></div><div class="r" style="left:802px;top:34.5px;width:1px;height:1px;background:#000000;opacity:0.4"></div><div class="r" style="left:801px;top:36.5px;width:31px;height:1px;background:#a31515;opacity:0.5"></div><div class="r" style="left:832px;top:36.5px;width:1px;height:1px;background:#000000;opacity:0.4"></div><div class="r" style="left:834px;top:36.5px;width:1px;height:1px;background:#000000;opacity:0.4"></div><div class="r" style="left:803px;top:38.5px;width:13px;height:1px;background:#a31515;opacity:0.5"></div><div class="r" style="left:816px;top:38.5px;width:1px;height:1px;background:#000000;opacity:0.4"></div><div class="r" style="left:818px;top:38.5px;width:1px;height:1px;background:#000000;opacity:0.4"></div><div class="r" style="left:805px;top:40.5px;width:6px;height:1px;background:#a31515;opacity:0.5"></div><div class="r" style="left:811px;top:40.5px;width:1px;height:1px;background:#000000;opacity:0.4"></div><div class="r" style="left:813px;top:40.5px;width:16px;height:1px;background:#a31515;opacity:0.5"></div><div class="r" style="left:830px;top:40.5px;width:9px;height:1px;background:#a31515;opacity:0.5"></div><div class="r" style="left:803px;top:42.5px;width:1px;height:1px;background:#000000;opacity:0.4"></div><div class="r" style="left:801px;top:44.5px;width:1px;height:1px;background:#000000;opacity:0.4"></div><div class="r" style="left:802px;top:44.5px;width:1px;height:1px;background:#000000;opacity:0.4"></div><div class="r" style="left:801px;top:46.5px;width:23px;height:1px;background:#a31515;opacity:0.5"></div><div class="r" style="left:824px;top:46.5px;width:1px;height:1px;background:#000000;opacity:0.4"></div><div class="r" style="left:826px;top:46.5px;width:1px;height:1px;background:#000000;opacity:0.4"></div><div class="r" style="left:803px;top:48.5px;width:13px;height:1px;background:#a31515;opacity:0.5"></div><div class="r" style="left:816px;top:48.5px;width:1px;height:1px;background:#000000;opacity:0.4"></div><div class="r" style="left:818px;top:48.5px;width:17px;height:1px;background:#a31515;opacity:0.5"></div><div class="r" style="left:835px;top:48.5px;width:1px;height:1px;background:#000000;opacity:0.4"></div><div class="r" style="left:803px;top:50.5px;width:21px;height:1px;background:#a31515;opacity:0.5"></div><div class="r" style="left:824px;top:50.5px;width:1px;height:1px;background:#000000;opacity:0.4"></div><div class="r" style="left:826px;top:50.5px;width:26px;height:1px;background:#a31515;opacity:0.5"></div><div class="r" style="left:801px;top:52.5px;width:1px;height:1px;background:#000000;opacity:0.4"></div><div class="r" style="left:802px;top:52.5px;width:1px;height:1px;background:#000000;opacity:0.4"></div><div class="r" style="left:801px;top:54.5px;width:17px;height:1px;background:#a31515;opacity:0.5"></div><div class="r" style="left:818px;top:54.5px;width:1px;height:1px;background:#000000;opacity:0.4"></div><div class="r" style="left:820px;top:54.5px;width:1px;height:1px;background:#000000;opacity:0.4"></div><div class="r" style="left:803px;top:56.5px;width:1px;height:1px;background:#000000;opacity:0.4"></div><div class="r" style="left:805px;top:58.5px;width:6px;height:1px;background:#a31515;opacity:0.5"></div><div class="r" style="left:811px;top:58.5px;width:1px;height:1px;background:#000000;opacity:0.4"></div><div class="r" style="left:813px;top:58.5px;width:8px;height:1px;background:#a31515;opacity:0.5"></div><div class="r" style="left:822px;top:58.5px;width:6px;height:1px;background:#a31515;opacity:0.5"></div><div class="r" style="left:829px;top:58.5px;width:4px;height:1px;background:#a31515;opacity:0.5"></div><div class="r" style="left:834px;top:58.5px;width:9px;height:1px;background:#a31515;opacity:0.5"></div><div class="r" style="left:844px;top:58.5px;width:10px;height:1px;background:#a31515;opacity:0.5"></div><div class="r" style="left:855px;top:58.5px;width:3px;height:1px;background:#a31515;opacity:0.5"></div><div class="r" style="left:859px;top:58.5px;width:12px;height:1px;background:#a31515;opacity:0.5"></div><div class="r" style="left:872px;top:58.5px;width:11px;height:1px;background:#a31515;opacity:0.5"></div><div class="r" style="left:884px;top:58.5px;width:5px;height:1px;background:#a31515;opacity:0.5"></div><div class="r" style="left:803px;top:60.5px;width:1px;height:1px;background:#000000;opacity:0.4"></div><div class="r" style="left:801px;top:62.5px;width:1px;height:1px;background:#000000;opacity:0.4"></div><div class="r" style="left:799px;top:64.5px;width:1px;height:1px;background:#000000;opacity:0.4"></div><div class="r" style="left:889px;top:0px;width:1px;height:523px;background:#e6e6e6;"></div><div class="r" style="left:890px;top:0px;width:13px;height:2px;background:#404040;"></div><div class="r" style="left:890px;top:2px;width:6px;height:6px;background:#a6a6a6;"></div><div class="r" style="left:890px;top:283px;width:6px;height:7px;background:#a6a6a6;"></div></div><div class="r" style="left:1915px;top:47px;width:5px;height:780px;background:#a9a9a9;border-radius:3px 0 0 3px;"></div><div class="r" style="left:42px;top:875px;width:1878px;height:66px;background:#ffffff;"></div><div class="r" style="left:42px;top:875px;width:1878px;height:1px;background:#dde1ec;"></div><div class="r" style="left:887px;top:893px;width:81px;height:31px;box-sizing:border-box;border:1px solid #04854a;background:#fff;"></div><svg style="left:899px;top:900px" width="18" height="16"><path d="M3 8.2 H16.3" stroke="#04854a" stroke-width="2.4"/><path d="M1.8 8.2 L7 3.6 V12.8 Z" fill="#04854a"/></svg><div class="t" style="left:920.20px;top:900.38px;font-family:'Liberation Sans', sans-serif;font-size:15.6px;line-height:17.428px;color:#04854a;font-weight:normal;font-style:normal;">Back</div><div class="r" style="left:976px;top:893px;width:100px;height:31px;background:#038543;"></div><svg style="left:987px;top:899px" width="18" height="18"><path d="M3.3 3.2 H12.6 L15.5 6.1 V14.8 H3.3 Z" fill="none" stroke="#fff" stroke-width="1.5" stroke-linejoin="round"/><path d="M6 3.4 V7 H11.6 V3.4" fill="none" stroke="#fff" stroke-width="1.3"/><rect x="9.4" y="3.9" width="1.3" height="2.2" fill="#fff"/><path d="M5.8 14.6 V10.2 H13 V14.6" fill="none" stroke="#fff" stroke-width="1.3"/></svg><div class="t" style="left:1006.40px;top:900.38px;font-family:'Liberation Sans', sans-serif;font-size:15.6px;line-height:17.428px;color:#ffffff;font-weight:normal;font-style:normal;">Preview</div></body></html>
